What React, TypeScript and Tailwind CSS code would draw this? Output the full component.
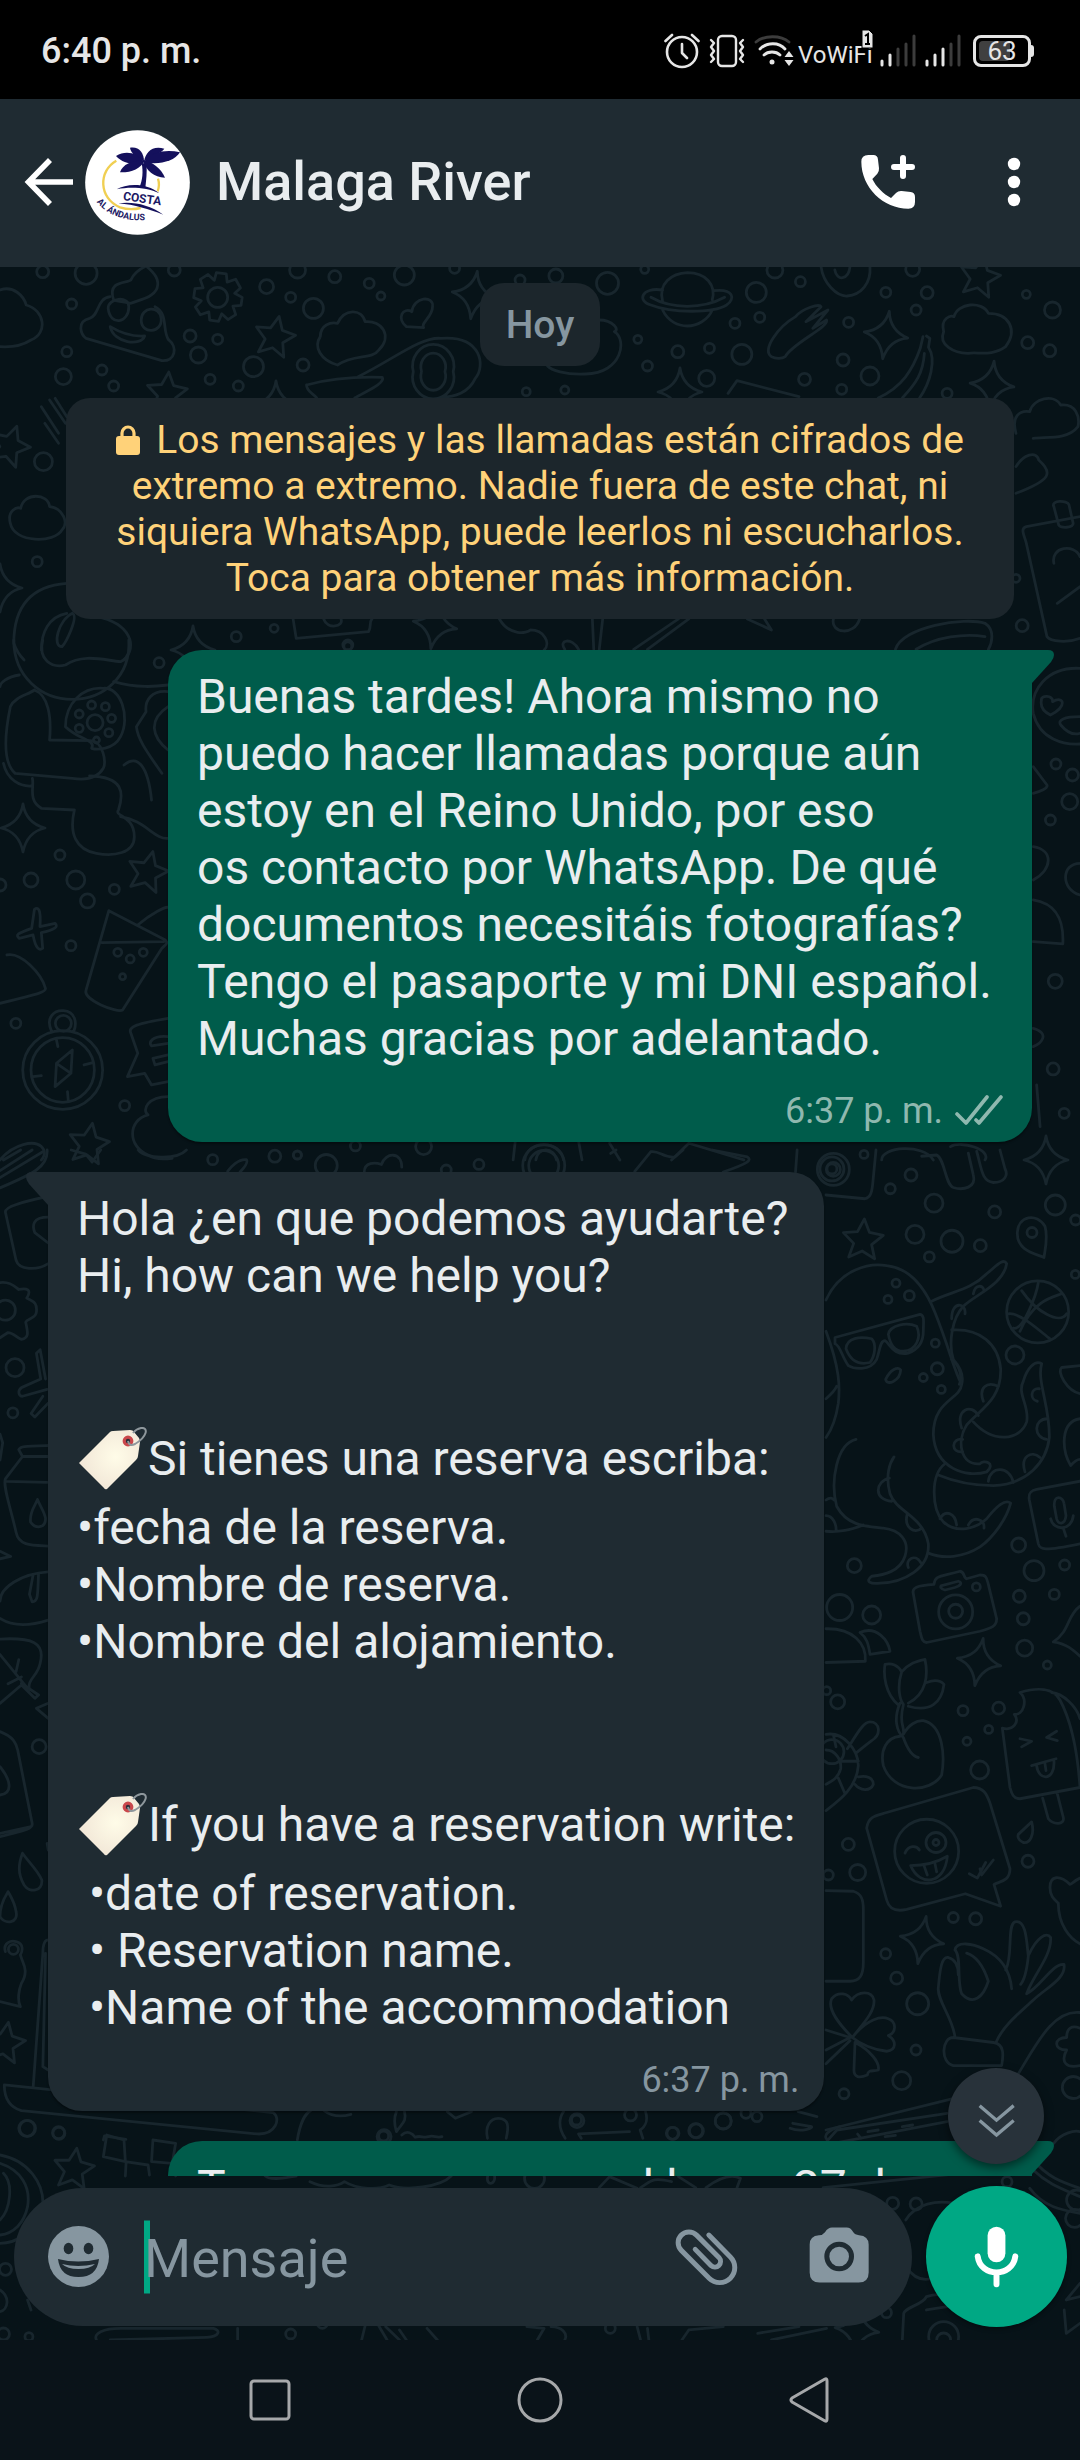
import React from "react";

type Dot = [number, number, number];
type Zone = { ox: number; oy: number; sx: number; sy: number; dots: Dot[]; paths: string[] };

const ZONES: Zone[] = [
  {
    ox: 0, oy: 260, sx: 0.6888, sy: 0.3333,
    dots: [
      [62, 35, 6], [125, 40, 11], [253, 30, 6], [432, 30, 8], [486, 50, 6], [536, 70, 5], [587, 45, 10], [387, 80, 7],
      [422, 112, 5], [553, 108, 4], [455, 145, 10], [104, 132, 5], [276, 228, 6], [316, 238, 5], [288, 285, 8],
      [368, 320, 10], [440, 315, 6], [97, 275, 5], [92, 350, 8], [148, 330, 5], [165, 378, 5], [305, 358, 5],
      [346, 378, 5], [755, 60, 5], [807, 48, 7], [882, 70, 11], [1098, 97, 10], [1162, 65, 5], [1286, 97, 5],
      [1346, 98, 6], [1330, 150, 5], [1103, 172, 5], [1067, 190, 5], [1030, 265, 5], [1077, 283, 10], [984, 275, 6],
      [940, 318, 5], [1026, 355, 8], [1168, 358, 6], [1222, 388, 5], [1263, 348, 9], [1224, 300, 6], [1232, 187, 5],
      [926, 238, 4], [1490, 103, 4], [1528, 150, 8], [1492, 248, 6], [1524, 272, 6], [820, 390, 4], [764, 395, 4],
      [63, 605, 9], [54, 905, 5], [398, 1105, 4], [343, 1130, 5], [505, 1158, 4], [1484, 1097, 6], [1475, 955, 4],
      [1125, 30, 8], [1325, 28, 7], [316, 112, 10], [660, 25, 5], [936, 28, 4], [1375, 400, 5],
    ],
    paths: [
      "M165 120 C155 60 185 70 190 60 C195 35 205 25 212 18 C225 40 232 60 228 85 C222 115 200 120 190 130 C175 125 168 122 165 120",
      "M160 110 C140 115 145 165 130 175 C110 185 118 225 125 235 L235 302 C255 305 258 260 245 240 C235 215 245 160 225 140",
      "M157 145 C157 115 187 105 187 140 C187 190 160 200 157 145 M205 180 C205 140 232 135 234 175 C236 220 205 225 205 180 M160 200 C180 225 195 230 210 228 C205 260 165 250 160 200",
      "M0 90 C20 75 35 110 38 135 C65 150 70 220 45 240 C30 260 15 262 0 260",
      "M465 230 C465 195 480 185 490 190 C500 145 525 145 530 185 C555 180 570 230 550 270 C540 300 515 280 490 315 C465 300 455 260 465 230",
      "M590 200 C575 175 585 140 598 155 C600 110 630 105 628 140 C628 170 610 190 615 203 Z",
      "M520 350 C570 300 610 230 640 235 C700 225 705 320 690 355 C680 400 660 410 640 412 M600 335 A30 65 0 1 1 658 335 A30 65 0 1 1 600 335 M612 335 A18 42 0 1 1 646 335 A18 42 0 1 1 612 335",
      "M445 375 C480 355 520 350 555 352 C560 370 530 395 515 414 M445 375 C445 395 455 400 460 414",
      "M962 125 C955 70 975 40 998 38 C1025 38 1040 75 1034 120 M962 90 C930 80 925 125 945 135 C975 160 1035 160 1055 135 C1068 115 1065 85 1036 92 M962 150 C970 185 985 198 998 198 C1012 198 1028 180 1034 150 M945 112 C975 148 1020 148 1052 112",
      "M1192 20 C1195 70 1215 110 1230 108 C1250 105 1265 70 1263 20 M1212 30 C1215 65 1232 60 1234 20",
      "M1370 215 C1365 175 1380 165 1385 170 C1390 130 1425 120 1435 160 C1465 160 1478 210 1460 260 C1440 290 1420 275 1405 280 C1385 280 1362 255 1370 215",
      "M1120 290 C1105 270 1130 200 1155 170 C1165 145 1190 130 1192 140 L1170 185 L1202 150 L1180 205 L1200 180 C1205 200 1150 250 1140 290 C1135 298 1125 296 1120 290",
      "M1345 228 L1350 235 L1348 262 C1360 300 1350 370 1335 414 M1340 230 L1336 265 C1325 330 1310 380 1275 414 M1342 280 C1340 340 1330 370 1310 414",
      "M1057 400 L1070 362 L1160 410 M870 180 C890 180 900 210 892 215 C910 235 905 340 850 342 C820 345 800 330 795 318",
      "M60 440 L85 520 M72 420 L95 490 M80 415 L97 470 M65 490 L85 550",
      "M1475 520 C1468 470 1480 450 1495 455 C1500 415 1530 400 1540 435 C1562 430 1568 470 1565 500 C1550 540 1520 530 1500 535",
      "M1475 620 C1485 585 1505 570 1508 600 C1530 640 1525 660 1475 700 M1530 740 C1525 720 1550 720 1552 735 L1558 790 C1558 805 1540 805 1537 795Z",
      "M1568 770 L1490 800 C1480 805 1488 830 1490 850 L1520 1130 C1525 1145 1550 1150 1568 1135 M1530 910 C1525 860 1560 850 1568 890 M1535 1030 L1568 980",
      "M15 790 C10 750 25 740 30 745 C35 695 70 700 72 740 C92 745 100 790 90 810 C80 850 20 850 15 790",
      "M97 970 C30 980 20 1080 20 1150 C25 1180 30 1190 35 1200 M97 1060 C70 1070 60 1120 60 1170 M105 1060 C115 1070 95 1150 90 1160 C75 1160 85 1080 105 1060 M140 1070 C190 1090 200 1160 180 1200",
      "M425 1070 L430 1135 L535 1115 C540 1100 535 1090 540 1077 M470 1077 C475 1110 500 1100 495 1077 M725 1077 C740 1130 765 1120 770 1110 C790 1110 800 1150 790 1170 M860 1077 L862 1168 M875 1077 L870 1168 M1085 1077 L1120 1110 L1110 1077 M920 1168 L985 1077 M940 1168 L1000 1077",
      "M1300 1168 C1310 1100 1400 1070 1430 1090 C1445 1110 1440 1150 1435 1168 M1330 1168 C1360 1130 1400 1120 1430 1130 M1210 1077 C1205 1120 1240 1130 1248 1077 M820 1168 C810 1140 830 1130 840 1168",
    ],
  },
  {
    ox: 0, oy: 640, sx: 0.6888, sy: 0.3333,
    dots: [
      [231, 68, 5], [87, 645, 5], [45, 720, 7], [110, 720, 9], [166, 748, 5], [127, 783, 7], [103, 917, 5], [171, 937, 4],
      [208, 937, 4], [189, 957, 4], [178, 1010, 3], [23, 1150, 5], [181, 1397, 5], [133, 195, 4], [153, 200, 4],
      [115, 222, 4], [162, 235, 4], [115, 265, 4], [158, 278, 4], [138, 248, 8], [140, 300, 3], [1533, 372, 5],
      [1557, 405, 6], [1525, 540, 5], [1553, 485, 8], [1532, 1024, 7], [1529, 1287, 6], [1545, 1420, 5], [516, 1518, 5],
      [615, 1520, 8], [432, 1545, 4], [92, 1150, 8], [0, 735, 6], [505, 15, 5],
    ],
    paths: [
      "M20 0 C20 110 60 178 105 178 C150 178 190 110 187 0 M62 0 C55 60 75 85 95 75 C120 40 150 60 175 65 C190 50 188 20 187 0",
      "M28 105 C10 110 0 130 0 140 M50 150 C70 165 75 230 72 300 L130 302 C150 300 155 370 150 385 C140 420 120 420 105 415 L22 400 C5 370 5 300 15 200 C22 170 40 165 50 150",
      "M150 145 C175 140 190 230 175 290 C165 330 140 330 133 325 C140 300 115 300 95 260 C95 190 120 140 150 145",
      "M165 125 C200 145 225 140 244 135 M244 155 C220 150 210 180 212 215 L198 260 C200 300 215 340 235 400 M180 375 C200 340 215 380 220 480 M244 200 C215 240 220 290 244 330",
      "M5 370 C10 420 30 440 45 438 M47 415 C50 440 40 480 60 505 L108 510 M130 408 C180 410 180 460 172 510 C165 530 195 525 195 590 C195 640 165 650 140 640 C110 630 100 580 108 510 M175 530 C210 540 225 600 244 595",
      "M50 808 C55 800 60 805 58 860 L80 850 C85 860 80 870 60 878 L62 925 C58 932 52 930 48 885 L28 895 C22 885 25 880 46 865Z",
      "M158 812 L240 900 C245 910 240 915 235 925 L178 1110 C170 1120 120 1080 125 1050 L158 812 M148 908 L238 905 M200 855 C220 820 240 800 244 802",
      "M10 945 C30 935 60 1000 66 1045 C67 1055 60 1060 0 1090",
      "M33 1290 A58 118 0 1 1 149 1290 A58 118 0 1 1 33 1290 M45 1290 A46 97 0 1 1 137 1290 A46 97 0 1 1 45 1290 M75 1175 C65 1130 80 1110 92 1112 C110 1115 112 1150 107 1175 M105 1230 L103 1300 L80 1340 L82 1270Z M103 1300 L82 1270 M98 1355 L99 1380 M82 1200 L84 1220 M48 1310 L60 1307 M122 1275 L135 1268",
      "M244 1135 C200 1150 185 1160 190 1180 L200 1240 L185 1310 L210 1300 L220 1335 L244 1325 M244 1190 C220 1185 215 1210 220 1218 L244 1210 M244 1245 L222 1255 L225 1275 L244 1265",
      "M244 1370 C215 1370 205 1410 215 1425 C185 1440 185 1520 215 1545 C225 1560 240 1558 250 1555",
      "M0 1560 C20 1510 50 1500 60 1520 C70 1540 60 1560 60 1560 M5 1560 L30 1530",
      "M748 1505 L745 1560 M762 1560 C765 1500 815 1500 818 1560 M778 1560 C780 1520 805 1520 808 1560 M840 1505 L845 1560 M885 1510 L900 1560 M975 1560 L1000 1510 L1080 1560 M1280 1560 C1280 1520 1340 1510 1355 1560 M1380 1520 C1395 1500 1440 1530 1430 1560",
      "M1568 85 C1520 80 1495 150 1500 220 C1510 300 1545 315 1568 312 M1512 180 C1510 165 1530 165 1528 185 C1545 165 1550 200 1525 225 C1515 215 1510 200 1512 180 M1568 230 C1545 230 1535 240 1540 255 C1550 280 1560 285 1568 280",
      "M1500 380 L1520 435 C1522 445 1510 455 1500 460 M1500 620 C1530 630 1528 690 1500 720 M1568 670 C1540 670 1540 750 1568 765 M1500 780 C1530 790 1545 830 1543 912 L1500 905 M1500 1165 C1525 1180 1512 1210 1500 1220 M1505 1335 L1510 1460",
    ],
  },
  {
    ox: 0, oy: 1150, sx: 0.5357, sy: 0.3444,
    dots: [
      [397, 28, 5], [513, 18, 6], [555, 15, 4], [609, 45, 11], [894, 42, 5], [833, 58, 5], [28, 632, 9], [24, 763, 5],
      [10, 465, 10], [1553, 55, 12], [1553, 55, 5], [1015, 45, 21], [1015, 45, 15],
    ],
    paths: [
      "M0 60 L60 0 M0 80 L80 5 M0 110 C60 70 90 50 88 0 M133 0 L160 12 L172 35 L188 0 M258 0 C270 25 330 30 348 0",
      "M425 62 C430 50 445 25 460 28 C465 38 450 60 448 64 M680 64 C680 35 700 35 712 42 C720 5 750 5 750 50 M1140 10 L1150 0 M1185 62 L1215 5 C1230 0 1240 25 1260 20 L1275 0 M1330 0 L1395 20 C1405 30 1395 40 1350 64 M1485 64 L1488 0",
      "M90 135 C60 145 10 160 10 180 L30 320 C35 350 70 350 90 330 M90 195 C60 195 60 220 65 240 L90 270",
      "M0 385 C20 380 30 400 35 405 C50 400 60 405 50 430 C60 440 70 440 68 470 C68 490 50 490 48 500 C52 530 55 545 40 550 C30 545 25 530 15 530 L0 545",
      "M85 665 L75 580 L68 590 L76 665 L40 690 C32 700 35 715 42 715 L88 695 M80 715 L58 765 L65 775 L90 735",
      "M0 825 L5 850 L0 900 M90 890 L42 890 L35 870 C38 860 45 860 90 858 M42 890 L10 955 C5 975 20 1040 30 1110 C35 1150 60 1148 90 1150 M12 962 L88 965 M70 1015 C65 1035 55 1050 57 1080 C65 1100 85 1100 85 1070 C83 1050 75 1035 70 1015 M0 1165 L20 1180 L0 1187",
      "M90 1225 C40 1230 0 1270 0 1310 M62 1232 L55 1290 L60 1312 C72 1310 70 1290 72 1230 M0 1360 C25 1385 60 1380 90 1365 M0 1420 C60 1415 85 1430 75 1490 C70 1530 50 1535 55 1568 M0 1465 L50 1560 M15 1550 L40 1530 M30 1515 L35 1480",
    ],
  },
  {
    ox: 0, oy: 1680, sx: 0.5357, sy: 0.3333,
    dots: [
      [73, 200, 7], [50, 1345, 8], [110, 1360, 6], [25, 808, 5], [1255, 1360, 6], [1300, 1353, 7], [1350, 1323, 8], [1413, 1310, 5],
      [717, 1370, 7], [1077, 1322, 7], [1177, 1305, 6], [1553, 215, 12],
    ],
    paths: [
      "M40 10 L72 45 L65 55 L40 15 L0 70 M90 70 L68 85 L90 115 M0 155 C25 170 30 190 33 210 L60 430 C62 445 50 450 0 470 M0 460 L58 440 M0 345 C25 340 20 300 0 260",
      "M42 520 C35 550 32 580 45 615 C55 640 80 635 78 600 C70 570 55 550 42 520 M15 635 C5 660 0 680 0 710 C10 735 35 730 30 695 C27 665 20 650 15 635 M88 490 L90 510",
      "M10 815 C5 790 20 780 30 785 C45 790 42 815 38 825 C42 850 55 870 40 910 C35 930 32 960 38 980 L0 965",
      "M90 780 C82 780 80 800 80 820 L62 1220 M90 1170 L80 1160 L85 820 M8 1215 L510 1298 C525 1315 515 1365 480 1362 L40 1292 C15 1280 8 1250 8 1215 M193 1380 L195 1368 L235 1378",
      "M555 1380 C560 1330 570 1300 580 1292 M605 1292 C620 1310 640 1310 655 1303 M740 1295 C735 1315 735 1330 740 1355 C750 1330 760 1325 755 1295 M750 1365 C760 1350 770 1360 775 1372 C785 1365 790 1375 800 1370 C810 1365 815 1375 825 1370 M910 1375 C905 1340 915 1315 930 1315 C950 1315 950 1340 945 1375",
      "M835 1295 L850 1315 L880 1295 M1055 1375 C1040 1340 1045 1310 1052 1295 M1205 1295 C1210 1320 1205 1340 1195 1350 L1200 1375 M1085 1375 L1080 1362 L1175 1355 M1490 1295 L1525 1310 M1480 1330 L1515 1340 M1475 1345 C1490 1355 1510 1350 1515 1342 M1568 1340 C1545 1350 1535 1370 1545 1380",
    ],
  },
  {
    ox: 0, oy: 2110, sx: 0.6888, sy: 0.3333,
    dots: [
      [40, 55, 8], [85, 68, 6], [8, 478, 6], [5, 672, 6], [42, 680, 4], [422, 672, 5], [837, 30, 5], [977, 70, 6],
      [1010, 62, 7], [1050, 33, 8], [1083, 10, 5], [557, 78, 5], [1296, 280, 6], [1330, 282, 6], [1462, 215, 5], [1560, 325, 9],
      [886, 655, 5], [1287, 608, 5], [468, 640, 5], [776, 205, 10], [1563, 270, 10], [1370, 680, 15], [1370, 690, 7],
    ],
    paths: [
      "M155 75 L180 90 L182 155 L150 140Z M222 90 L255 100 L250 160 L220 155Z M182 155 L215 165 L217 195 M183 160 L182 198 M252 165 L255 198",
      "M0 135 C40 150 65 220 62 290 C55 370 20 400 0 400 M0 160 C30 180 45 230 40 290 C35 340 20 370 0 375 M5 190 C20 220 15 300 0 330",
      "M385 198 C395 215 420 200 430 198 M450 215 C470 235 490 230 500 215 C520 240 550 240 565 225 C590 245 640 230 655 198 M708 198 C705 230 720 225 718 198 M870 233 L885 200 L925 235 M930 233 C945 215 945 200 975 215 M985 200 L1010 233 M1025 233 C1040 210 1060 190 1075 205 L1070 233 M1195 233 L1395 190",
      "M0 540 C15 560 12 600 0 605 M45 600 L40 570 M140 690 C135 670 150 655 175 655 L310 655 C320 660 320 680 300 682 L160 690 M530 648 L525 690 M550 648 L562 690 M560 650 L580 690 M580 660 L590 690 M345 655 L345 690 M620 655 L635 690 M765 650 L790 655 L780 690 M800 650 C815 650 825 670 820 690",
      "M925 650 L930 690 M940 655 L942 690 M990 690 L1000 660 L1050 650 M1100 670 L1160 650 M1120 690 L1200 655 M1310 690 L1312 610 C1315 590 1340 585 1345 560 C1360 550 1380 550 1382 580 L1405 590 M1345 600 L1375 590",
      "M1315 330 C1330 280 1360 270 1385 280 M1315 470 C1325 500 1340 520 1360 500 M1495 235 C1515 290 1540 300 1568 310 M1500 150 C1520 200 1540 215 1568 235 M1500 180 C1520 220 1540 235 1568 260 M1530 100 C1540 70 1560 60 1568 65 M1548 570 L1568 520 M1548 570 L1568 560 M1545 600 L1548 670 L1568 640",
      "M1200 95 L1215 60 L1375 10 M1210 100 L1375 35 M1245 72 L1250 85 M1260 65 L1275 60 M1285 80 L1300 76 M1310 50 L1325 45",
    ],
  },
  {
    ox: 820, oy: 1150, sx: 0.3333, sy: 0.625,
    dots: [
      [40, 31, 16], [40, 31, 7], [132, 7, 4], [273, 40, 6], [211, 62, 5], [342, 85, 9], [524, 99, 6], [285, 135, 9],
      [396, 146, 11], [328, 171, 5], [481, 153, 6], [706, 88, 10], [767, 112, 5], [636, 132, 5], [766, 199, 4], [228, 213, 4],
      [204, 239, 4], [268, 233, 5], [346, 309, 4], [352, 350, 6], [310, 364, 4], [364, 383, 4], [585, 328, 9], [653, 259, 31],
      [103, 665, 7], [596, 632, 7], [642, 673, 10], [734, 664, 5], [598, 714, 6], [703, 711, 5], [610, 750, 6], [614, 797, 8],
      [682, 824, 4], [53, 883, 7], [429, 897, 5], [536, 893, 6], [506, 927, 4], [441, 946, 4], [479, 992, 9], [59, 732, 13],
      [155, 744, 9], [407, 739, 17], [407, 738, 7], [469, 699, 4], [85, 1111, 6], [113, 1156, 8], [25, 1160, 5], [624, 1138, 6],
      [400, 1228, 5], [467, 1230, 6], [197, 1286, 5], [230, 1325, 6], [293, 1366, 11], [288, 1440, 5], [245, 1489, 9], [72, 1510, 5],
      [348, 1108, 10], [348, 1108, 3], [320, 1122, 32], [20, 865, 4], [760, 1500, 11],
    ],
    paths: [
      "M18 72 L135 78 C150 76 155 70 158 55 L168 0 M305 10 L350 8 C375 15 375 55 400 60 C430 65 470 60 460 40 L445 5 M470 2 C485 30 485 50 520 52 C555 52 565 40 555 30 L540 0",
      "M592 132 C595 105 650 100 675 122 C685 140 675 160 672 172 C640 165 590 160 592 132",
      "M18 240 C60 190 150 180 200 185 C290 190 330 240 345 260 C390 320 400 350 425 375 C420 400 340 400 340 455 C345 510 440 525 500 515 C530 500 490 495 480 502 C420 505 410 465 440 440 C480 415 545 400 542 350 C535 310 480 285 395 288 M18 290 C60 350 60 380 55 405 C45 440 25 455 18 460 M18 398 C35 390 45 385 50 378",
      "M335 242 C400 225 450 225 500 198 C530 185 550 172 560 182 C550 215 470 230 430 250 C395 270 385 310 400 335 C425 350 430 365 425 375",
      "M45 300 L300 263 C315 265 310 275 310 290 C310 310 290 320 265 325 C220 330 210 310 195 305 C180 305 180 320 170 335 C150 355 100 350 85 345 C65 330 60 312 45 310Z M78 318 C80 300 120 298 155 302 C170 310 165 330 150 340 C110 345 90 335 78 318 M205 295 C210 280 260 275 290 282 C305 300 290 320 250 322 C225 322 210 310 205 295 M197 367 C210 352 235 345 242 352 C240 370 200 378 197 367",
      "M460 435 C520 470 600 465 620 435 C630 410 590 390 610 370 C620 350 645 335 665 342 C650 370 690 410 688 460 C680 500 620 535 520 537 C460 537 400 530 355 520 M375 502 C330 520 335 575 370 595 C410 615 470 605 500 590 C530 570 555 558 572 565 C560 590 520 620 480 635 C430 652 370 655 325 645 M360 590 C375 575 405 580 410 600 M445 600 C460 585 495 590 492 605",
      "M108 463 C50 470 30 530 50 570 C80 600 130 602 190 605 C240 608 270 625 255 650 C240 675 190 680 155 682 C135 690 150 695 180 693 C250 692 330 670 325 630 C310 585 230 580 210 550 C195 520 210 500 222 491 M208 525 C165 530 160 560 215 562 M18 560 C30 555 38 557 42 560 M18 610 C60 612 90 608 130 600 M262 582 C250 605 285 615 305 605 M265 668 C255 655 285 645 302 660 M18 585 C40 585 50 600 48 610",
      "M395 270 C395 240 440 245 435 262 M395 335 C420 345 428 365 418 375 M490 402 C475 380 500 370 535 378 M425 445 C405 415 455 405 475 425 M428 483 C390 485 395 460 428 463 M505 530 C510 505 570 505 580 532 M615 515 C600 490 635 480 660 492 M680 463 C640 460 640 430 682 430 M652 402 C630 400 630 380 658 382 M460 230 C465 215 490 215 492 225",
      "M580 285 C610 290 650 230 655 212 M605 225 C650 260 720 280 740 262 M600 290 C640 240 700 235 725 230 M567 262 C600 260 660 290 690 302 M780 345 L725 348 C710 355 740 385 780 390 M780 430 C720 435 725 480 752 505 C760 500 770 495 780 495 M780 530 L650 543 C630 545 625 550 628 560 L655 630 C660 640 670 642 780 630 M703 570 C700 550 730 555 732 565 L738 585 C735 600 715 600 710 590Z M692 590 C700 610 755 610 760 585 M730 605 L738 618",
      "M18 766 C100 765 140 790 136 818 L18 820 M120 772 C170 760 205 785 210 802 L150 807 C145 790 140 780 120 772 M280 710 C275 700 290 697 342 695 C345 680 360 683 420 674 C435 675 430 685 440 686 L480 680 C500 680 500 685 505 695 L530 750 C530 762 515 765 480 770 L320 788 C305 787 305 780 300 770Z M365 697 L415 690 C430 692 420 698 405 700 L375 704 C360 702 360 698 365 697",
      "M780 730 C740 745 750 770 700 787 C740 790 760 800 780 810 M235 888 C195 870 190 840 195 823 C215 820 235 825 245 835 C270 820 290 818 315 815 C325 840 320 870 265 885 M245 835 C230 860 240 880 250 887 M320 852 C340 848 360 848 372 855 C365 885 330 900 265 890 M240 885 C220 910 230 930 250 940 C260 955 275 970 295 972 M250 888 C235 920 255 920 250 935 C265 920 290 912 310 913 C370 920 375 970 365 1000 C330 1030 220 1030 190 985 C180 960 200 940 240 938",
      "M18 935 C70 930 115 960 115 985 C110 1020 60 1040 18 1057 M18 960 C45 960 65 975 62 990 C55 1005 35 1010 18 1015 M40 935 L48 955 M62 978 L115 978 M55 1005 L75 1030 M82 958 C110 935 130 915 150 915 C180 915 185 935 155 945 C130 955 120 960 108 965 M115 1003 C140 1000 160 1005 160 1015 C150 1027 120 1025 105 1015",
      "M140 1085 C145 1065 170 1065 200 1060 L460 1020 C490 1020 500 1030 510 1045 L570 1150 C570 1170 540 1170 522 1175 L542 1210 L436 1190 L260 1215 C220 1220 205 1210 200 1200Z M255 1125 C265 1112 290 1112 298 1120 M272 1145 C310 1145 350 1140 382 1130 C375 1175 300 1180 272 1145 M312 1145 L322 1160 M345 1142 L350 1155 M448 1158 L472 1165 L497 1140 M480 1150 L485 1160 L520 1136",
      "M547 925 C580 930 600 915 583 903 C610 905 625 880 600 868 C650 860 700 860 720 880 C760 920 775 980 780 1020 L600 1038 C580 1038 575 1030 570 1020 L547 925 M695 868 C730 870 770 890 780 910 M668 1037 L685 1070 C700 1080 735 1080 730 1068 L712 1030 M600 942 L635 946 L605 955 M710 930 L680 940 L712 945 M635 985 L708 974 M650 985 C655 1010 705 1010 702 978 M675 982 L678 993 M595 1095 L635 1075 C645 1095 630 1110 610 1108 C598 1105 592 1100 595 1095",
      "M780 1165 C760 1170 755 1175 750 1175 C720 1160 690 1160 690 1180 C690 1195 705 1200 715 1205 C715 1240 750 1262 780 1270 M18 1185 L100 1186 C125 1190 130 1200 130 1215 L130 1300 C130 1320 120 1330 90 1330 L18 1330",
      "M405 1280 C410 1265 460 1270 490 1278 C540 1290 570 1310 575 1342 M405 1280 C425 1290 410 1330 425 1350 C460 1370 490 1355 505 1330 C490 1305 470 1290 440 1285 M405 1420 C400 1390 350 1360 355 1340 C360 1310 365 1290 385 1292 C405 1295 415 1305 415 1320 M557 1312 C580 1290 560 1240 585 1235 C620 1230 620 1270 625 1290 C620 1315 610 1330 602 1335 M627 1287 C650 1260 680 1250 692 1260 C695 1290 640 1320 620 1350 C660 1340 700 1300 732 1303 C740 1325 680 1340 640 1360 C600 1380 550 1400 528 1428 M400 1420 L520 1428 C555 1430 550 1450 545 1465 L400 1465 C360 1460 365 1420 400 1420",
      "M97 1420 C60 1400 20 1375 35 1358 C55 1345 85 1350 95 1360 C115 1345 155 1345 162 1360 C165 1380 125 1400 97 1420 C140 1390 185 1385 205 1390 C230 1395 230 1412 205 1417 C230 1425 230 1440 200 1442 C160 1440 120 1430 97 1420 M105 1428 C150 1440 180 1460 175 1472 C160 1475 145 1470 142 1480 C120 1485 100 1485 102 1470Z M18 1408 L90 1420 L18 1440 M18 1462 L90 1425",
      "M780 1380 C700 1375 650 1430 595 1478 M780 1405 C755 1400 740 1405 740 1420 C700 1420 700 1440 740 1440 C720 1460 740 1470 780 1465 M18 1568 L420 1515",
    ],
  },
];

const STAR = "M0 -20 L6 -7 L20 -5 L9 5 L13 19 L0 12 L-13 19 L-9 5 L-20 -5 L-6 -7Z";
const SPARKLE = "M0 -24 Q3 -5 22 0 Q4 4 0 24 Q-4 4 -22 0 Q-3 -5 0 -24Z";
const GEAR = "M-5 -24 L5 -24 L7 -16 L15 -20 L21 -12 L16 -6 L24 -3 L24 5 L16 7 L20 15 L13 21 L6 16 L4 24 L-5 24 L-7 16 L-15 20 L-21 13 L-16 6 L-24 4 L-24 -5 L-16 -7 L-20 -15 L-13 -21 L-6 -16Z";

const STAMPS: [string, number, number, number][] = [
  [GEAR, 218, 297, 8],
  [STAR, 275, 336, 12], [STAR, 167, 392, 5], [STAR, 980, 276, 12], [STAR, 10, 445, 20], [STAR, 148, 871, 14],
  [STAR, 89, 1143, 10], [STAR, 863, 1239, 4], [STAR, 5, 2042, 10], [STAR, 74, 2168, 8],
  [SPARKLE, 474, 295, 8], [SPARKLE, 886, 335, 8], [SPARKLE, 992, 385, 5], [SPARKLE, 680, 392, 0], [SPARKLE, 276, 405, 0],
  [SPARKLE, 435, 625, 10], [SPARKLE, 23, 828, 0], [SPARKLE, 193, 650, 0], [SPARKLE, 0, 588, 0], [SPARKLE, 1046, 1160, 0],
  [SPARKLE, 979, 1662, 10], [SPARKLE, 922, 1940, 10], [SPARKLE, 857, 2330, 6],
];

function Wallpaper() {
  return (
    <svg aria-hidden="true" className="absolute inset-0 h-full w-full" viewBox="0 0 1080 2460" preserveAspectRatio="xMidYMin slice" fill="none" stroke="#18262d" strokeWidth="2.800" strokeLinecap="round" strokeLinejoin="round">
      {ZONES.map((z, i) => (
        <g key={i}>
          <g transform={`translate(${z.ox} ${z.oy}) scale(${z.sx} ${z.sy})`}>
            {z.paths.map((d, j) => <path key={j} d={d} vectorEffect="non-scaling-stroke" />)}
          </g>
          {z.dots.map(([x, y, r], j) => <circle key={j} cx={z.ox + x * z.sx} cy={z.oy + y * z.sy} r={r} />)}
        </g>
      ))}
      {STAMPS.map(([d, x, y, a], i) => <path key={i} d={d} transform={`translate(${x} ${y}) rotate(${a})`} />)}
    </svg>
  );
}

function Signal({ on }: { on: number }) {
  return (
    <svg width="36" height="34" viewBox="0 0 36 34" aria-hidden="true" strokeWidth="3" strokeLinecap="round">
      {[27, 21, 15, 10, 2].map((y, i) => (
        <path key={i} d={`M${2 + i * 8} ${y}V31`} stroke={i < on ? "#e6e6e6" : "#3c3c3c"} />
      ))}
    </svg>
  );
}

function StatusBar() {
  return (
    <div className="flex h-[99px] items-center justify-between bg-black pt-[2px] pr-[46px] pl-[41px] text-[#e6e6e6]">
      <span className="text-4xl font-medium">6:40 p. m.</span>
      <div className="flex items-center">
        <svg className="mr-[9px]" width="36" height="36" viewBox="0 0 36 36" fill="none" stroke="#e6e6e6" strokeWidth="2.6" strokeLinecap="round" strokeLinejoin="round" aria-hidden="true">
          <circle cx="18" cy="19" r="15" />
          <path d="M18 11V20L23 25M1.5 8L8 2M34.500 8L28 2" />
        </svg>
        <svg className="mr-[9px]" width="36" height="34" viewBox="0 0 36 34" fill="none" stroke="#e6e6e6" strokeWidth="2.4" strokeLinecap="round" strokeLinejoin="round" aria-hidden="true">
          <rect x="9" y="2" width="18" height="30" rx="4" />
          <path d="M2 6L5 9L2 13L5 17L2 21L5 25L2 28M34 6L31 9L34 13L31 17L34 21L31 25L34 28" />
        </svg>
        <svg className="mr-1" width="40" height="34" viewBox="0 0 40 34" fill="none" strokeWidth="2.800" strokeLinecap="round" aria-hidden="true">
          <path d="M2 8C10 1 27 1 35 8" stroke="#3c3c3c" />
          <path d="M6 15C13 8 25 8 31 15M10 21C14 17 22 17 26 21" stroke="#e6e6e6" />
          <circle cx="18" cy="28" r="2.500" fill="#e6e6e6" />
          <path d="M35 17L39.500 23H30.500ZM35 32L39.500 26H30.500Z" fill="#e6e6e6" />
        </svg>
        <div className="relative mr-[6px] flex w-[76px] items-center pt-2">
          <span className="text-2xl leading-8">VoWiFi</span>
          <svg className="absolute -top-0.5 right-0" width="13" height="20" viewBox="0 0 13 20" aria-hidden="true">
            <path d="M1 1H8L12 5V19H1Z" fill="#e6e6e6" stroke="#000" strokeWidth="1" />
            <path d="M4 7L7 5V15M4 15H9" fill="none" stroke="#000" strokeWidth="2" />
          </svg>
        </div>
        <span className="mr-[9px]"><Signal on={2} /></span>
        <span className="mr-3"><Signal on={3} /></span>
        <div className="flex items-center">
          <div className="relative flex h-8 w-[58px] items-center justify-center rounded-lg border-3 border-[#e6e6e6] text-[26px] leading-none">
            <span className="absolute top-[3px] bottom-[3px] left-[3px] w-[31px] rounded-sm bg-[#404040]" />
            <span className="relative">63</span>
          </div>
          <span className="h-3 w-[3px] rounded-r bg-[#e6e6e6]" />
        </div>
      </div>
    </div>
  );
}

function Avatar() {
  return (
    <svg className="size-[105px] shrink-0" viewBox="45 30 315 315" role="img" aria-label="Costa Al Ándalus">
      <defs><path id="avatar-arc" d="M80 246Q132 308 234 300" /></defs>
      <circle cx="202.500" cy="187.500" r="157" fill="#fff" />
      <path d="M139 122C85 152 85 235 150 262Q180 272 212 264M264 176Q270 195 263 214" fill="none" stroke="#f0cf52" strokeWidth="7" />
      <g fill="#14105c">
        <path d="M208 203C218 180 220 155 215 130L229 130C232 158 228 182 226 203Z" />
        <path d="M222 124C222 98 206 78 180 83C182 100 202 114 222 124Z" />
        <path d="M222 124C228 96 246 76 283 86C272 100 248 110 222 124Z" />
        <path d="M222 126C246 94 290 88 330 97C312 126 262 136 222 126Z" />
        <path d="M222 126C200 98 168 90 138 108C162 134 198 136 222 126Z" />
        <path d="M224 122C190 120 158 132 150 157C184 158 212 146 224 122Z" />
        <path d="M218 120C246 124 274 146 285 173C252 172 228 152 218 120Z" />
        <path d="M140 208C170 190 230 188 268 220C230 202 180 200 140 208Z" />
        <path d="M145 250C190 244 238 254 280 284C236 268 195 254 145 250Z" />
      </g>
      <text x="158" y="240" transform="rotate(8 158 240)" fontFamily="Roboto, sans-serif" fontSize="36" fontWeight="700" fill="#1c1964">COSTA</text>
      <text fontFamily="Roboto, sans-serif" fontSize="27" fontWeight="700" fill="#1c1964"><textPath href="#avatar-arc">AL ÁNDALUS</textPath></text>
    </svg>
  );
}

function Header() {
  return (
    <header className="relative flex h-[168px] items-center bg-[#1f2b32] pb-0.5 pl-6">
      <button aria-label="Atrás" className="mr-[11px]">
        <svg width="50" height="50" viewBox="0 0 50 50" fill="none" stroke="#fff" strokeWidth="5.600">
          <path d="M49 25H6M26 3L4.500 25L26 47" />
        </svg>
      </button>
      <Avatar />
      <h1 className="ml-[26px] flex-1 text-[54px] leading-[64px] font-medium text-[#e9edef]">Malaga River</h1>
      <button aria-label="Llamar" className="mr-[91px]">
        <svg width="56" height="56" viewBox="660 465 168 168" fill="#fff">
          <path d="M685 468Q664 468 664 488C664 565 730 629 805 629Q825 629 825 609V594Q825 581 812 579L785 576Q775 575 768 582L753 597C730 585 708 563 697 540L712 524Q718 517 717 508L714 482Q713 468 700 468Z" />
          <path d="M789 477V531M762 504H816" stroke="#fff" strokeWidth="18" strokeLinecap="round" />
        </svg>
      </button>
      <button aria-label="Más opciones" className="mr-[59px]">
        <svg width="14" height="50" viewBox="0 0 14 50" fill="#fff">
          <circle cx="7" cy="7" r="6.200" /><circle cx="7" cy="25" r="6.200" /><circle cx="7" cy="43" r="6.200" />
        </svg>
      </button>
    </header>
  );
}

function Tag() {
  return (
    <svg className="mr-px ml-[2px] shrink-0" width="68" height="63" viewBox="0 0 68 63" role="img" aria-label="Etiqueta">
      <defs>
        <radialGradient id="tag-paper" cx="0.600" cy="0.450" r="0.700">
          <stop offset="0" stopColor="#fffce8" /><stop offset="1" stopColor="#efe3d4" />
        </radialGradient>
      </defs>
      <path d="M0 36L31 5Q32 4 34 4L51 3Q54 3 55 5L60 11Q61 13 61 15L59 29Q59 31 57 33L28 62Q26 63 25 61Z" fill="url(#tag-paper)" />
      <circle cx="49" cy="14" r="3.800" fill="#2a2f38" stroke="#c9474b" strokeWidth="3.200" />
      <path d="M49 14Q50 20 56 17C68 10 70 0 62 1Q57 2 54 6" fill="none" stroke="#8e979c" strokeWidth="2" />
    </svg>
  );
}

function Outgoing({ children, time }: { children: React.ReactNode; time: string }) {
  return (
    <article className="relative mr-12 ml-[168px] rounded-[34px] rounded-tr-none bg-[#005c4b] px-[29px] pt-[18px] pb-[10px] text-[#e9edef] shadow-[0_2px_2px_rgba(0,0,0,0.35)]">
      <svg className="absolute top-0 left-full" width="22" height="33" viewBox="0 0 22 33" fill="#005c4b" aria-hidden="true">
        <path d="M0 0H16Q22 0 22 5Q22 8 19 12L0 33Z" />
      </svg>
      <p className="text-5xl leading-[57px] whitespace-pre">{children}</p>
      <div className="mt-[23px] flex items-center justify-end gap-3 text-4xl leading-[42px] text-[#8fb8af]">
        <time>{time}</time>
        <svg width="48" height="34" viewBox="0 0 48 34" fill="none" stroke="#8fb8af" strokeWidth="3.600" strokeLinecap="round" strokeLinejoin="round" role="img" aria-label="Entregado">
          <path d="M2 20L11 29L32 3M21 26L24 29L46 3" />
        </svg>
      </div>
    </article>
  );
}

function Incoming() {
  return (
    <article className="relative ml-12 w-fit rounded-[34px] rounded-tl-none bg-[#1f2b32] px-[29px] pt-[18px] pb-[10px] text-[#e9edef] shadow-[0_2px_2px_rgba(0,0,0,0.35)]">
      <svg className="absolute top-0 right-full" width="22" height="33" viewBox="0 0 22 33" fill="#1f2b32" aria-hidden="true">
        <path d="M22 0H6Q0 0 0 5Q0 8 3 12L22 33Z" />
      </svg>
      <div className="text-5xl leading-[57px] whitespace-pre">
        <p>{"Hola ¿en que podemos ayudarte?\nHi, how can we help you?\n\n\n"}</p>
        <p className="flex h-[81px] items-center"><Tag />Si tienes una reserva escriba:</p>
        <p>{"•fecha de la reserva.\n•Nombre de reserva.\n•Nombre del alojamiento.\n\n\n"}</p>
        <p className="flex h-[81px] items-center"><Tag />If you have a reservation write:</p>
        <p>{" •date of reservation.\n • Reservation name.\n •Name of the accommodation"}</p>
      </div>
      <time className="mt-[23px] -mr-1 block text-right text-4xl leading-[42px] text-[#8696a0]">6:37 p. m.</time>
    </article>
  );
}

function Composer() {
  return (
    <form className="relative flex items-center gap-[14px] pt-[10px] pr-[13px] pb-[13px] pl-[14px]" onSubmit={(e) => e.preventDefault()}>
      <div className="flex h-[138px] min-w-0 flex-1 items-center rounded-full bg-[#1f2b32] pr-[43px] pl-[34px]">
        <button type="button" aria-label="Emojis" className="shrink-0">
          <svg width="61" height="61" viewBox="0 0 61 61">
            <circle cx="30.500" cy="30.500" r="30.500" fill="#8696a0" />
            <g fill="#1f2b32">
              <ellipse cx="20.500" cy="22.500" rx="4.800" ry="5.800" /><ellipse cx="40.500" cy="22.500" rx="4.800" ry="5.800" />
              <path d="M10 33Q30 38 51 33Q49 51 30.500 51Q12 51 10 33Z" />
            </g>
            <path d="M14 38Q30 42 47 38Q42 43 30.500 43Q19 43 14 38Z" fill="#8696a0" />
          </svg>
        </button>
        <div className="relative ml-[35px] min-w-0 flex-1">
          <span className="absolute top-1/2 left-0 h-[73px] w-[6px] -translate-y-1/2 bg-[#00a884]" />
          <input aria-label="Mensaje" placeholder="Mensaje" className="relative block w-full bg-transparent pt-1 text-[54px] leading-[68px] text-[#e9edef] placeholder:text-[#8696a0] placeholder:opacity-100 focus:outline-none" />
        </div>
        <button type="button" aria-label="Adjuntar" className="shrink-0">
          <svg width="63" height="60" viewBox="105 500 190 180" fill="none" stroke="#8696a0" strokeWidth="15" strokeLinecap="round">
            <path d="M207 524L272 590A45 45 0 0 1 208 654L124 570A32.500 32.500 0 0 1 170 524L238 592A17 17 0 0 1 214 616L166 567" />
          </svg>
        </button>
        <button type="button" aria-label="Cámara" className="ml-[71px] shrink-0 pb-1">
          <svg width="60" height="56" viewBox="505 500 180 167">
            <path d="M535 524Q546 524 553 515Q562 501 574 501H618Q630 501 637 514Q643 524 655 524Q684 526 684 552V636Q684 666 654 666H537Q507 666 507 636V552Q507 526 535 524Z" fill="#8696a0" />
            <circle cx="595.500" cy="588" r="37" fill="none" stroke="#1f2b32" strokeWidth="15" />
          </svg>
        </button>
      </div>
      <button type="button" aria-label="Mensaje de voz" className="flex size-[141px] shrink-0 items-center justify-center rounded-full bg-[#00a884] shadow-[0_2px_4px_rgba(0,0,0,0.4)]">
        <svg width="45" height="62" viewBox="1003 498 136 188" fill="none" stroke="#fff" strokeWidth="18" strokeLinecap="round">
          <rect x="1044" y="500" width="54" height="108" rx="27" fill="#fff" stroke="none" />
          <path d="M1014 590C1022 655 1120 655 1128 590M1071 640V675" />
        </svg>
      </button>
    </form>
  );
}

function NavBar() {
  return (
    <nav className="relative grid h-[120px] grid-cols-3 place-items-center bg-[#0a1319] px-[12.500%]">
      <button aria-label="Recientes">
        <svg width="46" height="46" viewBox="0 0 46 46" fill="none" stroke="#a6a8aa" strokeWidth="3"><rect x="4" y="4" width="38" height="38" rx="3" /></svg>
      </button>
      <button aria-label="Inicio">
        <svg width="46" height="46" viewBox="0 0 46 46" fill="none" stroke="#a6a8aa" strokeWidth="3"><circle cx="23" cy="23" r="21" /></svg>
      </button>
      <button aria-label="Volver">
        <svg width="46" height="46" viewBox="0 0 46 46" fill="none" stroke="#a6a8aa" strokeWidth="3" strokeLinejoin="round"><path d="M38 2Q40 1 40 4V42Q40 45 38 44L5 25Q3 23 5 21Z" /></svg>
      </button>
    </nav>
  );
}

export default function App() {
  return (
    <div className="relative flex h-screen flex-col overflow-hidden bg-[#071318] font-[Roboto,sans-serif]">
      <Wallpaper />
      <div className="relative"><StatusBar /></div>
      <Header />
      <div className="relative min-h-0 flex-1">
        <main className="flex h-full flex-col overflow-hidden pt-4">
          <div className="mx-auto mb-8 rounded-3xl bg-[#1c262c] px-[26px] pt-[19px] pb-[17px] text-[39px] leading-[47px] font-medium text-[#8696a0]">Hoy</div>
          <p className="mx-[66px] mb-[31px] rounded-3xl bg-[#1c262c] px-11 pt-[19px] pb-[18px] text-center text-[39px] leading-[46px] text-[#ffd279]">
            <svg className="mr-4 mb-[6px] inline-block" width="24" height="30" viewBox="0 0 24 30" fill="none" role="img" aria-label="Cifrado">
              <path d="M6 13V8A6 6 0 0 1 18 8V13" stroke="#ffd279" strokeWidth="3.200" />
              <rect x="0" y="11" width="24" height="19" rx="3" fill="#ffd279" />
            </svg>
            Los mensajes y las llamadas están cifrados de extremo a extremo. Nadie fuera de este chat, ni siquiera WhatsApp, puede leerlos ni escucharlos. Toca para obtener más información.
          </p>
          <div className="flex flex-col gap-[30px]">
            <Outgoing time="6:37 p. m.">{"Buenas tardes! Ahora mismo no\npuedo hacer llamadas porque aún\nestoy en el Reino Unido, por eso\nos contacto por WhatsApp. De qué\ndocumentos necesitáis fotografías?\nTengo el pasaporte y mi DNI español.\nMuchas gracias por adelantado."}</Outgoing>
            <Incoming />
            <Outgoing time="6:38 p. m.">{"Tengo reserva para el lunes 27 de"}</Outgoing>
          </div>
        </main>
        <button aria-label="Ir al final" className="absolute right-9 bottom-3 flex size-24 items-center justify-center rounded-full bg-[#28323a] pt-2 shadow-[0_4px_10px_rgba(0,0,0,0.5)]">
          <svg width="39" height="37" viewBox="1010 125 116 112" fill="none" stroke="#8696a0" strokeWidth="10">
            <path d="M1017 136L1068 180L1120 136M1017 181L1068 225L1120 181" />
          </svg>
        </button>
      </div>
      <Composer />
      <NavBar />
    </div>
  );
}
